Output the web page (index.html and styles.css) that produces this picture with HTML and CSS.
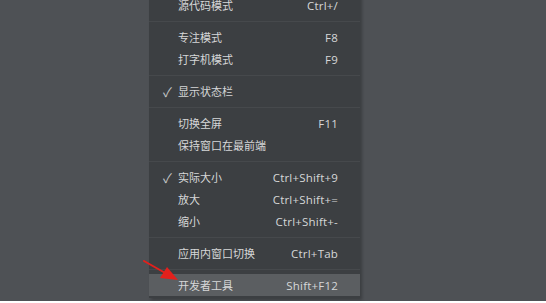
FILE: index.html
```html
<!DOCTYPE html>
<html lang="zh">
<head>
<meta charset="utf-8">
<link rel="stylesheet" href="styles.css">
</head>
<body>
<div class="stage">
  <div class="menu">
    <div class="item"><span class="check"></span><span class="label">源代码模式</span><span class="key">Ctrl+/</span></div>
    <div class="sep"></div>
    <div class="item"><span class="check"></span><span class="label">专注模式</span><span class="key">F8</span></div>
    <div class="item"><span class="check"></span><span class="label">打字机模式</span><span class="key">F9</span></div>
    <div class="sep"></div>
    <div class="item"><span class="check">✓</span><span class="label">显示状态栏</span><span class="key"></span></div>
    <div class="sep"></div>
    <div class="item"><span class="check"></span><span class="label">切换全屏</span><span class="key">F11</span></div>
    <div class="item"><span class="check"></span><span class="label">保持窗口在最前端</span><span class="key"></span></div>
    <div class="sep"></div>
    <div class="item"><span class="check">✓</span><span class="label">实际大小</span><span class="key">Ctrl+Shift+9</span></div>
    <div class="item"><span class="check"></span><span class="label">放大</span><span class="key">Ctrl+Shift+=</span></div>
    <div class="item"><span class="check"></span><span class="label">缩小</span><span class="key">Ctrl+Shift+-</span></div>
    <div class="sep"></div>
    <div class="item"><span class="check"></span><span class="label">应用内窗口切换</span><span class="key">Ctrl+Tab</span></div>
    <div class="sep"></div>
    <div class="item active"><span class="check"></span><span class="label">开发者工具</span><span class="key">Shift+F12</span></div>
    <svg class="arrow" width="40" height="24" viewBox="0 0 40 24">
      <line x1="1" y1="1" x2="24" y2="14" stroke="#e3201c" stroke-width="2" stroke-linecap="round"/>
      <polygon points="35,20 17,18 24,7" fill="#e3201c"/>
    </svg>
  </div>
</div>
</body>
</html>
```
FILE: styles.css
```css
html, body {
  margin: 0;
  padding: 0;
}
body {
  width: 546px;
  height: 303px;
  overflow: hidden;
  background: #ffffff;
}
.stage {
  height: 301px;
  background: #4e5155;
  overflow: hidden;
}
.menu {
  position: relative;
  width: 211px;
  margin-left: 149px;
  margin-top: -7px;
  padding: 1px 0 2px;
  background: #3c3f42;
  box-shadow: 2px 2px 3px rgba(0,0,0,0.25);
  font-family: "Noto Sans CJK SC", "Noto Sans", sans-serif;
  font-size: 11px;
  color: #d6d7d8;
}
.item {
  display: grid;
  grid-template-columns: 29px 1fr auto;
  align-items: center;
  height: 22px;
  padding-right: 22px;
}
.item.active {
  background: #5b5e61;
}
.check {
  text-align: right;
  padding-right: 6px;
  font-size: 13px;
  color: #c4c5c6;
}
.key {
  font-family: "Open Sans", "Noto Sans", sans-serif;
  font-size: 11.5px;
  letter-spacing: 0.2px;
}
.sep {
  height: 10px;
  display: flex;
  align-items: center;
}
.sep::before {
  content: "";
  flex: 1;
  height: 1px;
  background: #46494c;
}
.arrow {
  position: absolute;
  left: -6px;
  bottom: 14px;
}
```
